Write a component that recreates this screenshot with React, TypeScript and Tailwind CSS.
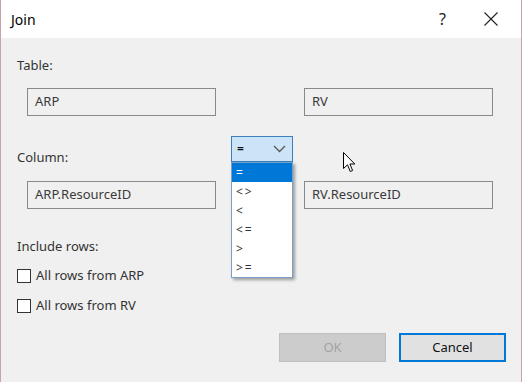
import React from 'react';

const ops = ['=', '<>', '<', '<=', '>', '>='];

// Read-only text box, like the disabled Win10 edit control
function Field({ value }: { value: string }) {
    return (
        <div className="w-[189px] h-[28px] border border-[#8a8a8a] bg-[#f0f0f0] flex items-center pl-[7px] text-[13px] text-[#3a3a3a]">
            {value}
        </div>
    );
}

function Check({ label }: { label: string }) {
    return (
        <div className="flex items-center h-[16px]">
            <div className="w-[14px] h-[14px] border border-[#333] bg-white" />
            <span className="ml-[5px] text-[13px] text-[#333]">{label}</span>
        </div>
    );
}

export default function App() {
    return (
        <div
            className="relative w-[523px] h-[382px] overflow-hidden bg-white"
            style={{ fontFamily: '"Noto Sans", "Liberation Sans", sans-serif' }}
        >
            <div className="w-[522px] h-full border-x border-[#c7a3ab] bg-[#f0f0f0] flex flex-col">
                {/* title bar */}
                <div className="h-[38px] bg-white flex items-center pl-[10px] shrink-0">
                    <span className="text-[14px] text-black">Join</span>
                    <span className="ml-auto text-[16px] text-[#222] mr-[38px]">?</span>
                    <svg width="14" height="14" viewBox="0 0 14 14" className="mr-[23px]">
                        <path d="M0.5 0.5 L13.5 13.5 M13.5 0.5 L0.5 13.5" stroke="#222" strokeWidth="1.1" />
                    </svg>
                </div>

                <div className="pl-[16px] flex flex-col">
                    <div className="mt-[19px] h-[16px] leading-[16px] text-[13px] text-[#333]">Table:</div>

                    <div className="mt-[15px] ml-[10px] flex gap-[88px]">
                        <Field value="ARP" />
                        <Field value="RV" />
                    </div>

                    <div className="mt-[20px] flex h-[26px]">
                        <div className="w-[214px] pt-[13px] leading-[16px] text-[13px] text-[#333]">Column:</div>
                        <div className="relative w-[62px] h-[26px] border border-[#3d7fbd] bg-[#cce4f7] flex items-center pl-[5px] pr-[6px] text-[12px] font-semibold text-[#111]">
                            <span>=</span>
                            <svg width="13" height="8" viewBox="0 0 13 8" className="ml-auto">
                                <path d="M1 1 L6.5 6.5 L12 1" stroke="#555" strokeWidth="1.3" fill="none" />
                            </svg>
                            <div className="absolute left-[-1px] top-[25px] w-[62px] h-[116px] border border-[#7c9fc8] bg-white shadow-[2px_2px_3px_rgba(0,0,0,0.35)] z-10 font-normal">
                                {ops.map((o, i) => (
                                    <div
                                        key={o}
                                        className={
                                            i === 0
                                                ? 'h-[19px] flex items-center pl-[4px] text-[12px] tracking-[2px] bg-[#0078d7] text-white'
                                                : 'h-[19px] flex items-center pl-[4px] text-[12px] tracking-[2px] text-[#333]'
                                        }
                                    >
                                        {o}
                                    </div>
                                ))}
                            </div>
                        </div>
                    </div>

                    <div className="mt-[19px] ml-[10px] flex gap-[88px]">
                        <Field value="ARP.ResourceID" />
                        <Field value="RV.ResourceID" />
                    </div>

                    <div className="mt-[29px] h-[16px] leading-[16px] text-[13px] text-[#333]">Include rows:</div>

                    <div className="mt-[14px]">
                        <Check label="All rows from ARP" />
                    </div>
                    <div className="mt-[14px]">
                        <Check label="All rows from RV" />
                    </div>

                    <div className="mt-[19px] flex justify-end gap-[13px] pr-[15px]">
                        <div className="w-[107px] h-[29px] bg-[#cccccc] border border-[#bfbfbf] flex items-center justify-center text-[13px] text-[#a3a3a3]">
                            OK
                        </div>
                        <div className="w-[107px] h-[29px] bg-[#e1e1e1] border-2 border-[#0078d7] flex items-center justify-center text-[13px] text-[#111]">
                            Cancel
                        </div>
                    </div>
                </div>
            </div>

            {/* mouse pointer */}
            <svg width="13" height="21" viewBox="0 0 13 21" className="absolute left-[343px] top-[152px]">
                <path d="M0.5 0.5 L0.5 16.5 L4.5 12.8 L7.3 19.5 L9.6 18.5 L6.9 12 L11.8 12 Z" fill="white" stroke="black" strokeWidth="1" />
            </svg>
        </div>
    );
}
